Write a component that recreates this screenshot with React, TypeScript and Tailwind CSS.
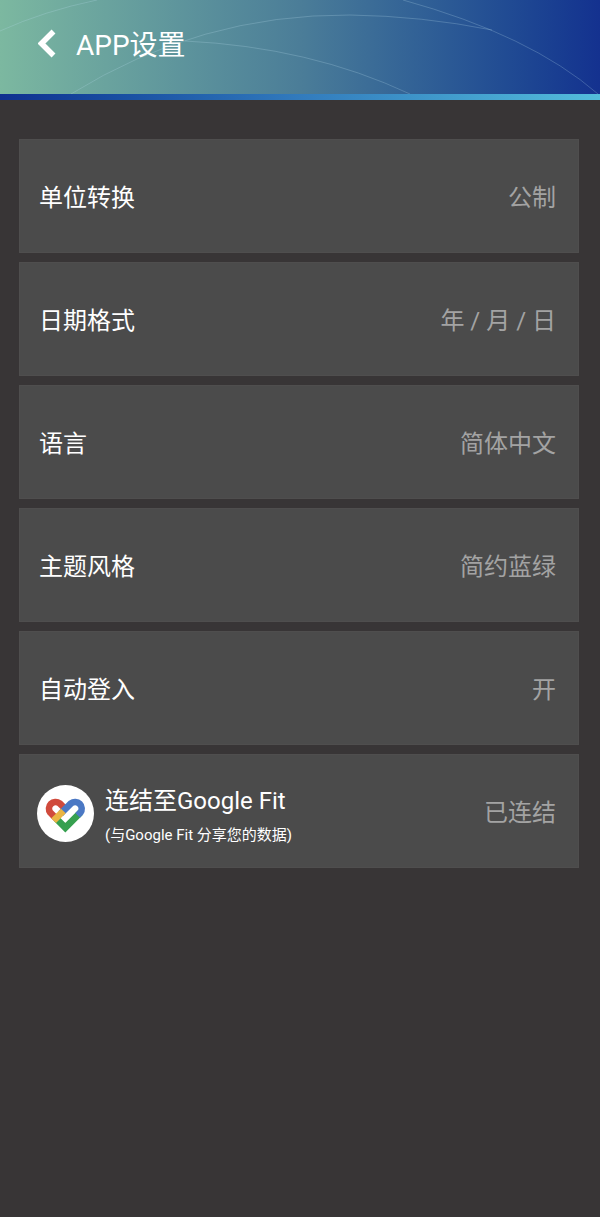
const settings = [
  { label: '单位转换', value: '公制' },
  { label: '日期格式', value: '年 / 月 / 日' },
  { label: '语言', value: '简体中文' },
  { label: '主题风格', value: '简约蓝绿' },
  { label: '自动登入', value: '开' },
];

const rowClass =
  'flex min-h-[114px] w-full items-center justify-between border border-[#4f4e4e] bg-[#4b4b4b] pt-1 pr-[22px] text-left text-2xl';

function BackIcon() {
  return (
    <svg viewBox="0 0 18 30" className="h-[30px] w-[18px]" fill="none" aria-hidden="true">
      <path d="M15.5 2.5 3.5 14.5l12 12" stroke="#fff" strokeWidth="5.5" />
    </svg>
  );
}

function GoogleFitIcon() {
  return (
    <svg viewBox="52 42 171 171" className="size-[57px] shrink-0" fill="none" aria-hidden="true">
      <circle cx="137.5" cy="127.5" r="85.5" fill="#fff" />
      <g strokeWidth="20">
        <path d="M182 125 137 170 109 142" stroke="#36a04f" />
        <path d="M137 114 120 97A20 20 0 0 0 92 125L109 142" stroke="#d04a3c" />
        <path d="M123 128 154 97A20 20 0 0 1 182 125L174 133" stroke="#4b78c4" />
        <path d="M102 149 131 120" stroke="#eab543" />
      </g>
    </svg>
  );
}

function Header() {
  return (
    <header>
      <div className="relative h-[94px] bg-linear-to-r from-[#7cb8a0] via-[#4b7d98] to-[#14318f]">
        {/* Decorative orbit lines */}
        <svg
          viewBox="0 0 600 94"
          preserveAspectRatio="none"
          className="absolute inset-0 h-full w-full"
          fill="none"
          stroke="#b9dcea"
          strokeOpacity="0.25"
          aria-hidden="true"
        >
          <path d="M0 31Q44 11 97 0" />
          <path d="M71 94Q200 14 350 15Q422 16 492 30" />
          <path d="M185 41Q310 47 410 94" />
          <path d="M403 0Q530 35 598 94" />
        </svg>
        <div className="relative flex h-full items-center gap-5 pb-0.5 pl-[38px]">
          <button type="button" aria-label="返回" className="pb-1">
            <BackIcon />
          </button>
          <h1 className="text-[28px] leading-10">APP设置</h1>
        </div>
      </div>
      <div className="h-[6px] bg-linear-to-r from-[#102f8f] via-[#327bbd] to-[#53bddb]" />
    </header>
  );
}

export default function App() {
  return (
    <div className="min-h-screen bg-[#383536] font-[Roboto,'Noto_Sans_CJK_SC',sans-serif] text-white">
      <Header />
      <main className="flex flex-col gap-[9px] pt-[39px] pr-[21px] pb-10 pl-[19px]">
        {settings.map((item) => (
          <button key={item.label} type="button" className={`${rowClass} pl-[19px]`}>
            <span>{item.label}</span>
            <span className="text-[#a3a3a3]">{item.value}</span>
          </button>
        ))}
        <button type="button" className={`${rowClass} pl-[17px]`}>
          <span className="flex items-center gap-[11px]">
            <GoogleFitIcon />
            <span className="flex flex-col pt-2">
              <span className="leading-9">连结至Google Fit</span>
              <span className="text-[15px] leading-8">(与Google Fit 分享您的数据)</span>
            </span>
          </span>
          <span className="text-[#a3a3a3]">已连结</span>
        </button>
      </main>
    </div>
  );
}
